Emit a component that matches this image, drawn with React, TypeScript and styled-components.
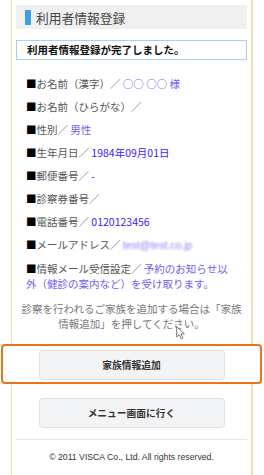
import React from 'react';
import styled, { createGlobalStyle } from 'styled-components';

const GlobalStyle = createGlobalStyle`
  html, body { margin:0; padding:0; background:#fff; }
  body { font-family:"Noto Sans CJK JP","Noto Sans",sans-serif; color:#555; }
`;

type Item = { label: string; value?: string; strong?: boolean; blur?: boolean };

const items: Item[] = [
  { label: 'お名前（漢字）／', value: '○○ ○○ 様' },
  { label: 'お名前（ひらがな）／' },
  { label: '性別／', value: '男性' },
  { label: '生年月日／', value: '1984年09月01日', strong: true },
  { label: '郵便番号／', value: '-', strong: true },
  { label: '診察券番号／' },
  { label: '電話番号／', value: '0120123456', strong: true },
  { label: 'メールアドレス／', value: 'test@test.co.jp', blur: true },
  { label: '情報メール受信設定／', value: '予約のお知らせ以外（健診の案内など）を受け取ります。' },
];

export default function App() {
  return (
    <Page>
      <GlobalStyle />
      <Panel>
        <Header>
          <Bar />
          <span>利用者情報登録</span>
        </Header>
        <Notice>利用者情報登録が完了しました。</Notice>
        <List>
          {items.map((it) => (
            <Row key={it.label}>
              <Square>■</Square>
              {it.label}
              {it.value && (
                <>
                  {' '}
                  <Value $strong={it.strong} $blur={it.blur}>{it.value}</Value>
                </>
              )}
            </Row>
          ))}
        </List>
        <Hint>診察を行われるご家族を追加する場合は「家族情報追加」を押してください。</Hint>
        <Highlight>
          <Button>家族情報追加</Button>
        </Highlight>
        <ButtonRow>
          <Button>メニュー画面に行く</Button>
        </ButtonRow>
        <Rule />
        <Footer>© 2011 VISCA Co., Ltd. All rights reserved.</Footer>
      </Panel>
      <Cursor width="10" height="14" viewBox="0 0 10 14">
        <path d="M0.7 0.7 L0.7 11 L3.2 8.6 L5.2 12.8 L7 12 L5 7.9 L8.4 7.9 Z" fill="#fff" stroke="#6a6a6a" strokeWidth="0.9" strokeLinejoin="round" />
      </Cursor>
    </Page>
  );
}

const Page = styled.div`
  position:relative;
  width:264px; height:475px; overflow:hidden;
  padding-left:11px; box-sizing:border-box;
`;
const Panel = styled.div`
  width:242px; box-sizing:border-box;
  border-left:1px solid #f3dfb6;
  border-right:2px solid #f3dfb6;
  border-bottom:2px solid #f3dfb6;
  padding:5px 4px 12px 4px;
  display:flex; flex-direction:column;
`;
const Header = styled.div`
  height:24px; background:#f0f0f0;
  display:flex; align-items:center; gap:5px;
  padding-left:9px;
  font-size:12.75px; color:#444;
`;
const Bar = styled.i`
  width:6px; height:15px; background:#3aa0e2; display:block;
`;
const Notice = styled.div`
  margin-top:11px;
  border:1px solid #a3d2f2;
  height:18px; line-height:18px;
  padding-left:10px;
  font-size:10.5px; font-weight:700; color:#111;
`;
const List = styled.div`
  margin-top:15.5px;
  padding:0 10px;
  display:flex; flex-direction:column; gap:8px;
`;
const Row = styled.div`
  font-size:10.5px; line-height:15px; color:#555;
`;
const Square = styled.span`
  color:#000;
`;
const Value = styled.span<{ $strong?: boolean; $blur?: boolean }>`
  color:${(p) => (p.$strong ? '#3a1cff' : '#6f60f2')};
  ${(p) => p.$blur && 'filter:blur(1.3px); color:#8d86f6; font-family:"Liberation Sans",sans-serif;'}
`;
const Hint = styled.p`
  margin:10.5px 0 0; padding:0 5px;
  text-align:center;
  font-size:10.5px; line-height:15px; color:#777;
`;
const Highlight = styled.div`
  margin:13px -15px 0;
  border:2px solid #e8741e; border-radius:4px;
  background:#fff;
  padding:4px 0 2px;
  display:flex; justify-content:center;
`;
const ButtonRow = styled.div`
  margin-top:14px;
  display:flex; justify-content:center;
`;
const Button = styled.button`
  width:186px; height:30px;
  background:#f3f4f6;
  border:1px solid #dddfe2; border-radius:4px;
  font-family:"Noto Sans CJK JP",sans-serif;
  font-size:9.75px; font-weight:700; color:#333;
  cursor:pointer;
`;
const Rule = styled.hr`
  margin:11px 0 0; border:0; border-top:1px solid #e6e6e6;
`;
const Footer = styled.div`
  margin-top:11px;
  text-align:center;
  font-family:"Liberation Sans",Arial,sans-serif;
  font-size:8.7px; line-height:12px; color:#333;
`;
const Cursor = styled.svg`
  position:absolute; left:176px; top:326px;
`;
